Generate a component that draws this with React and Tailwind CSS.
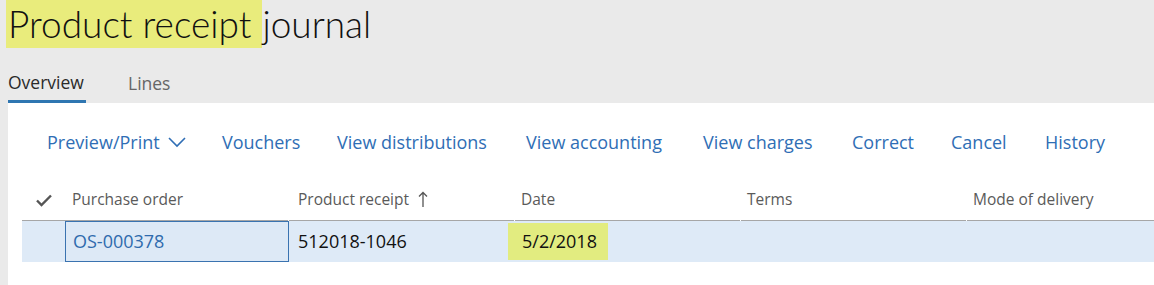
import React from 'react';

const actions = [
  { label: 'Preview/Print', w: 'w-[175px]', chevron: true },
  { label: 'Vouchers', w: 'w-[115px]' },
  { label: 'View distributions', w: 'w-[189px]' },
  { label: 'View accounting', w: 'w-[177px]' },
  { label: 'View charges', w: 'w-[149px]' },
  { label: 'Correct', w: 'w-[99px]' },
  { label: 'Cancel', w: 'w-[94px]' },
  { label: 'History', w: 'w-[90px]' },
];

const Chevron = () => (
  <svg width="18" height="11" viewBox="0 0 18 11" className="ml-[8px] mt-[1px]">
    <path d="M1 1 L9 9 L17 1" fill="none" stroke="#2f6eb5" strokeWidth="1.6" />
  </svg>
);

const Check = () => (
  <svg width="16" height="13" viewBox="0 0 16 13">
    <path d="M1 6.5 L5.5 11 L15 1.5" fill="none" stroke="#555" strokeWidth="2.4" />
  </svg>
);

const SortUp = () => (
  <svg width="10" height="17" viewBox="0 0 10 17" className="ml-[9px] mb-[2px]">
    <path d="M5 16 V1.5 M1 5.5 L5 1.5 L9 5.5" fill="none" stroke="#555" strokeWidth="1.3" />
  </svg>
);

const App = () => {
  return (
    <div className="w-[1154px] h-[285px] bg-[#eaeaea] overflow-hidden flex flex-col" style={{ fontFamily: '"Open Sans", "Noto Sans", sans-serif' }}>
      <div className="h-[48px] flex items-start">
        <h1 className="text-[37px] font-light leading-[48px] text-[#111]" style={{ fontFamily: '"Lato Light", Lato, "Open Sans", sans-serif' }}>
          <span className="bg-[#e9ec7c] ml-[6px] pl-[2px] pr-[1px] inline-block">Product receipt&nbsp;</span>journal
        </h1>
      </div>

      <div className="h-[55px] flex items-end pl-[8px]">
        <div className="flex flex-col w-[78px] h-[31px] justify-between">
          <span className="text-[17.5px] leading-[20px] text-[#2a2a2a] whitespace-nowrap">Overview</span>
          <div className="h-[3px] bg-[#2f76b1]" />
        </div>
        <div className="h-[31px] ml-[42px]">
          <span className="text-[17.5px] leading-[20px] text-[#666]">Lines</span>
        </div>
      </div>

      <div className="flex-1 ml-[8px] bg-white flex flex-col">
        <div className="h-[77px] flex items-center pl-[39px] pt-[1px]">
          {actions.map((a) => (
            <div key={a.label} className={`${a.w} flex items-center shrink-0`}>
              <span className="text-[18px] text-[#2f6eb5] whitespace-nowrap">{a.label}</span>
              {a.chevron && <Chevron />}
            </div>
          ))}
        </div>

        <div className="ml-[14px] flex h-[41px] text-[15.5px] text-[#5a5a5a]">
          <div className="w-[43px] flex items-center justify-center border-b border-[#a6a6a6] pt-[1px]">
            <Check />
          </div>
          <div className="w-[223px] flex items-center pl-[7px] border-b border-[#a6a6a6]">Purchase order</div>
          <div className="w-[225px] flex items-center pl-[9px] border-b border-[#a6a6a6] ml-[1px]">
            Product receipt <SortUp />
          </div>
          <div className="w-[225px] flex items-center pl-[6px] border-b border-[#a6a6a6] ml-[1px]">Date</div>
          <div className="w-[225px] flex items-center pl-[6px] border-b border-[#a6a6a6] ml-[1px]">Terms</div>
          <div className="flex-1 flex items-center pl-[6px] border-b border-[#a6a6a6] ml-[1px]">Mode of delivery</div>
        </div>

        <div className="ml-[14px] flex h-[41px] bg-[#deeaf7] text-[18px]">
          <div className="w-[43px]" />
          <div className="w-[224px] flex items-center pl-[7px] border border-[#3a73b0] bg-[#dde9f6] text-[#2f6bad]">OS-000378</div>
          <div className="w-[225px] flex items-center pl-[9px] text-[#111]">512018-1046</div>
          <div className="w-[226px] flex items-center">
            <span className="bg-[#e2ec80] h-[37px] w-[100px] flex items-center pl-[14px] -ml-[6px] text-[#111] whitespace-nowrap">5/2/2018</span>
          </div>
          <div className="flex-1" />
        </div>
      </div>
    </div>
  );
};

export default App;
